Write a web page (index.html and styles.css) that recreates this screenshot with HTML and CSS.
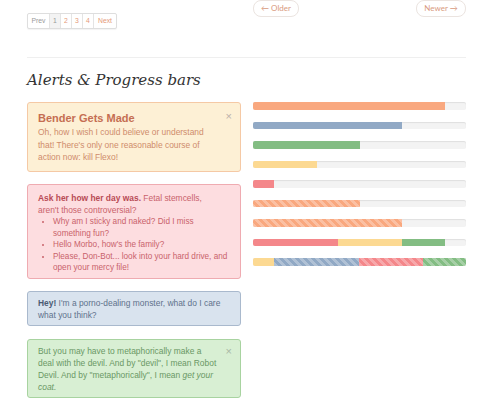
FILE: index.html
```html
<!DOCTYPE html>
<html>
<head>
<meta charset="utf-8">
<link rel="stylesheet" href="styles.css">
</head>
<body>
<div class="page">
  <div class="topbar">
    <div class="topleft">
      <div class="pagination">
        <span class="pg prev">Prev</span>
        <span class="pg num active">1</span>
        <span class="pg num">2</span>
        <span class="pg num">3</span>
        <span class="pg num">4</span>
        <span class="pg next">Next</span>
      </div>
    </div>
    <div class="pager">
      <span class="pill older">&larr; Older</span>
      <span class="pill newer">Newer &rarr;</span>
    </div>
  </div>

  <h2 class="title">Alerts &amp; Progress bars</h2>

  <div class="cols">
    <div class="col">
      <div class="alert alert-warning">
        <span class="close">&times;</span>
        <h4 class="alert-heading">Bender Gets Made</h4>
        <p>Oh, how I wish I could believe or understand<br>that! There's only one reasonable course of<br>action now: kill Flexo!</p>
      </div>
      <div class="alert alert-danger">
        <p><strong>Ask her how her day was.</strong> Fetal stemcells,<br>aren't those controversial?</p>
        <ul>
          <li>Why am I sticky and naked? Did I miss<br>something fun?</li>
          <li>Hello Morbo, how's the family?</li>
          <li>Please, Don-Bot... look into your hard drive, and<br>open your mercy file!</li>
        </ul>
      </div>
      <div class="alert alert-info">
        <p><strong>Hey!</strong> I'm a porno-dealing monster, what do I care<br>what you think?</p>
      </div>
      <div class="alert alert-success">
        <span class="close">&times;</span>
        <p>But you may have to metaphorically make a<br>deal with the devil. And by "devil", I mean Robot<br>Devil. And by "metaphorically", I mean <em>get your<br>coat.</em></p>
      </div>
    </div>
    <div class="col">
      <div class="progress"><div class="bar orange" style="width:90%"></div></div>
      <div class="progress"><div class="bar blue" style="width:70%"></div></div>
      <div class="progress"><div class="bar green" style="width:50%"></div></div>
      <div class="progress"><div class="bar yellow" style="width:30%"></div></div>
      <div class="progress"><div class="bar red" style="width:10%"></div></div>
      <div class="progress"><div class="bar orange striped" style="width:50%"></div></div>
      <div class="progress"><div class="bar orange striped" style="width:70%"></div></div>
      <div class="progress">
        <div class="bar red" style="width:40%"></div>
        <div class="bar yellow" style="width:30%"></div>
        <div class="bar green" style="width:20%"></div>
      </div>
      <div class="progress">
        <div class="bar yellow" style="width:10%"></div>
        <div class="bar blue striped" style="width:40%"></div>
        <div class="bar red striped" style="width:30%"></div>
        <div class="bar green striped" style="width:20%"></div>
      </div>
    </div>
  </div>
</div>
</body>
</html>
```

FILE: styles.css
```css
html, body {
  margin: 0;
  padding: 0;
  background: #ffffff;
}

.page {
  width: 439px;
  margin-left: 27px;
  font-family: "Liberation Sans", Arial, sans-serif;
  color: #555;
}

.topbar {
  display: grid;
  grid-template-columns: 214px 213px;
  column-gap: 12px;
  height: 57px;
  border-bottom: 1px solid #efefef;
}

.topleft {
  padding-top: 9px;
}

.pagination {
  display: inline-flex;
  border: 1px solid #dedede;
  border-radius: 2px;
  box-shadow: 0 1px 1px rgba(0,0,0,0.05);
  background: #fff;
}

.pg {
  display: block;
  height: 14px;
  line-height: 14px;
  font-size: 6.8px;
  text-align: center;
  color: #e59a7a;
  border-left: 1px solid #e4e4e4;
}

.pg.prev {
  width: 21px;
  border-left: 0;
  color: #9a9a9a;
}

.pg.num {
  width: 10px;
}

.pg.active {
  background: #f3f3f3;
  color: #9a9a9a;
}

.pg.next {
  width: 22px;
}

.pager {
  display: flex;
  justify-content: space-between;
  align-items: flex-start;
}

.pill {
  display: block;
  height: 15px;
  line-height: 15px;
  border: 1px solid #ebe4e0;
  border-radius: 8px;
  font-family: Lato, "Liberation Sans", sans-serif;
  font-size: 8px;
  color: #d99a80;
  text-align: center;
  background: #fff;
}

.older {
  width: 44px;
}

.newer {
  width: 48px;
}

.title {
  margin: 12px 0 12px;
  font-family: "DejaVu Serif", Georgia, serif;
  font-style: italic;
  font-weight: normal;
  font-size: 15px;
  line-height: 20px;
  color: #333;
}

.cols {
  display: grid;
  grid-template-columns: 214px 213px;
  column-gap: 12px;
  align-items: start;
}

.alert {
  border: 1px solid;
  border-radius: 3px;
  padding: 5px 8px 4px 10px;
  margin-bottom: 12.5px;
  font-size: 8.44px;
  line-height: 12px;
  white-space: nowrap;
}

.alert p {
  margin: 0;
}

.close {
  float: right;
  margin-right: 0;
  font-size: 11px;
  line-height: 12px;
  color: #bcb0aa;
}

.alert-warning {
  background: #fdf0d5;
  border-color: #f5c9a5;
  color: #cf8c6c;
  padding-top: 7px;
  padding-bottom: 7px;
  line-height: 12.5px;
}

.alert-heading {
  margin: 0;
  font-size: 11px;
  line-height: 16px;
  font-weight: bold;
  color: #c56e52;
}

.alert-danger {
  background: #fddde0;
  border-color: #efabb1;
  color: #c9626b;
  padding-top: 8px;
  padding-bottom: 4px;
  line-height: 11.5px;
}

.alert-danger strong {
  color: #b84b55;
}

.alert-danger ul {
  margin: 0;
  padding-left: 15px;
  font-size: 8.2px;
}

.alert-info {
  background: #d9e3ee;
  border-color: #a9b9cd;
  color: #5f728c;
}

.alert-info strong {
  color: #4b5b73;
}

.alert-success {
  background: #d8efd3;
  border-color: #a8d3a0;
  color: #6a9865;
}

.alert-success .close {
  color: #a9b8a5;
}

.progress {
  display: flex;
  height: 7.5px;
  margin-bottom: 12px;
  background: #f3f3f3;
  border-radius: 2px;
  overflow: hidden;
  box-shadow: inset 0 1px 1px rgba(0,0,0,0.08);
}

.bar {
  height: 100%;
}

.orange { background-color: #f9a87f; }
.blue { background-color: #91a9c5; }
.green { background-color: #83bd83; }
.yellow { background-color: #fcd992; }
.red { background-color: #f4878a; }

.striped {
  background-image: linear-gradient(45deg,
    rgba(255,255,255,0.28) 25%, transparent 25%,
    transparent 50%, rgba(255,255,255,0.28) 50%,
    rgba(255,255,255,0.28) 75%, transparent 75%, transparent);
  background-size: 8px 8px;
}
```
